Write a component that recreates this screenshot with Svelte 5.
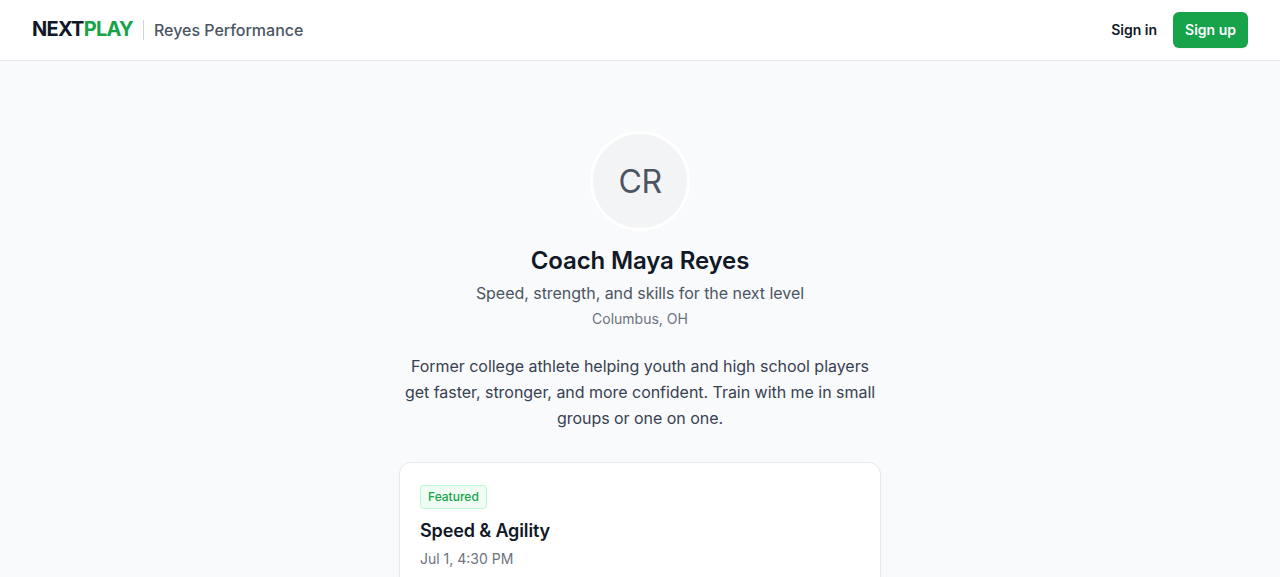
<script lang="ts">
  const coach = {
    initials: 'CR',
    name: 'Coach Maya Reyes',
    tagline: 'Speed, strength, and skills for the next level',
    location: 'Columbus, OH',
    bio: 'Former college athlete helping youth and high school players get faster, stronger, and more confident. Train with me in small groups or one on one.'
  };

  const sessions = [
    { title: 'Speed & Agility', date: 'Jul 1, 4:30 PM', featured: true }
  ];
</script>

<header class="topbar">
  <div class="brand">
    <span class="logo">NEXT<span class="logo-accent">PLAY</span></span>
    <span class="divider"></span>
    <span class="business">Reyes Performance</span>
  </div>
  <nav class="auth">
    <button class="btn-link">Sign in</button>
    <button class="btn-primary">Sign up</button>
  </nav>
</header>

<main class="profile">
  <div class="avatar">{coach.initials}</div>
  <h1>{coach.name}</h1>
  <p class="tagline">{coach.tagline}</p>
  <p class="location">{coach.location}</p>
  <p class="bio">{coach.bio}</p>

  <section class="sessions">
    {#each sessions as session}
      <article class="card">
        {#if session.featured}
          <span class="badge">Featured</span>
        {/if}
        <h2>{session.title}</h2>
        <p class="date">{session.date}</p>
      </article>
    {/each}
  </section>
</main>

<style>
  :global(html), :global(body) {
    height: 100%;
    overflow: hidden;
  }

  :global(body) {
    background-color: #f9fafb;
    font-family: Inter, "Liberation Sans", sans-serif;
    color: #111827;
  }

  .topbar {
    display: flex;
    align-items: center;
    justify-content: space-between;
    height: 60px;
    padding: 0 32px;
    background-color: #ffffff;
    border-bottom: 1px solid #e5e7eb;
  }

  .brand {
    display: flex;
    align-items: center;
    gap: 10px;
  }

  .logo {
    padding-bottom: 2px;
    font-size: 20px;
    font-weight: 700;
    letter-spacing: -0.75px;
    color: #111827;
  }

  .logo-accent {
    color: #16a34a;
  }

  .divider {
    width: 1px;
    height: 20px;
    background-color: #d1d5db;
  }

  .business {
    font-size: 16px;
    font-weight: 500;
    letter-spacing: -0.02px;
    color: #4b5563;
  }

  .auth {
    display: flex;
    align-items: center;
    gap: 16px;
  }

  button {
    font-family: inherit;
    font-size: 14px;
    font-weight: 600;
    border: none;
    cursor: pointer;
  }

  .btn-link {
    padding: 0 0 2px;
    background: none;
    color: #111827;
  }

  .btn-primary {
    height: 36px;
    padding: 0 12px 2px;
    background-color: #16a34a;
    border-radius: 6px;
    color: #ffffff;
    box-shadow: 0 1px 2px rgba(0, 0, 0, 0.05);
  }

  .profile {
    display: flex;
    flex-direction: column;
    align-items: center;
    padding-top: 70px;
    text-align: center;
  }

  .avatar {
    display: flex;
    align-items: center;
    justify-content: center;
    box-sizing: border-box;
    width: 100px;
    height: 100px;
    background-color: #f3f4f6;
    border: 3px solid #ffffff;
    border-radius: 50%;
    font-size: 32px;
    letter-spacing: -0.6px;
    color: #4b5563;
  }

  h1 {
    margin: 14px 0 0;
    font-size: 24px;
    line-height: 32px;
    font-weight: 600;
    letter-spacing: -0.12px;
  }

  .tagline {
    margin: 4px 0 0;
    font-size: 16px;
    line-height: 24px;
    letter-spacing: -0.04px;
    color: #4b5563;
  }

  .location {
    margin: 4px 0 0;
    font-size: 14px;
    line-height: 20px;
    color: #6b7280;
  }

  .bio {
    width: 480px;
    margin: 24px 0 0;
    font-size: 16px;
    line-height: 26px;
    letter-spacing: -0.035px;
    color: #374151;
  }

  .sessions {
    width: 482px;
    margin-top: 31px;
  }

  .card {
    box-sizing: border-box;
    height: 200px;
    padding: 22px 20px;
    background-color: #ffffff;
    border: 1px solid #e5e7eb;
    border-radius: 12px;
    text-align: left;
  }

  .badge {
    display: inline-block;
    padding: 0 7px;
    background-color: #f0fdf4;
    border: 1px solid #bbf7d0;
    border-radius: 4px;
    font-size: 12px;
    line-height: 22px;
    font-weight: 500;
    color: #16a34a;
  }

  h2 {
    margin: 8px 0 0;
    font-size: 18px;
    line-height: 28px;
    font-weight: 600;
    letter-spacing: -0.13px;
  }

  .date {
    margin: 4px 0 0;
    font-size: 14px;
    line-height: 20px;
    color: #6b7280;
  }
</style>
